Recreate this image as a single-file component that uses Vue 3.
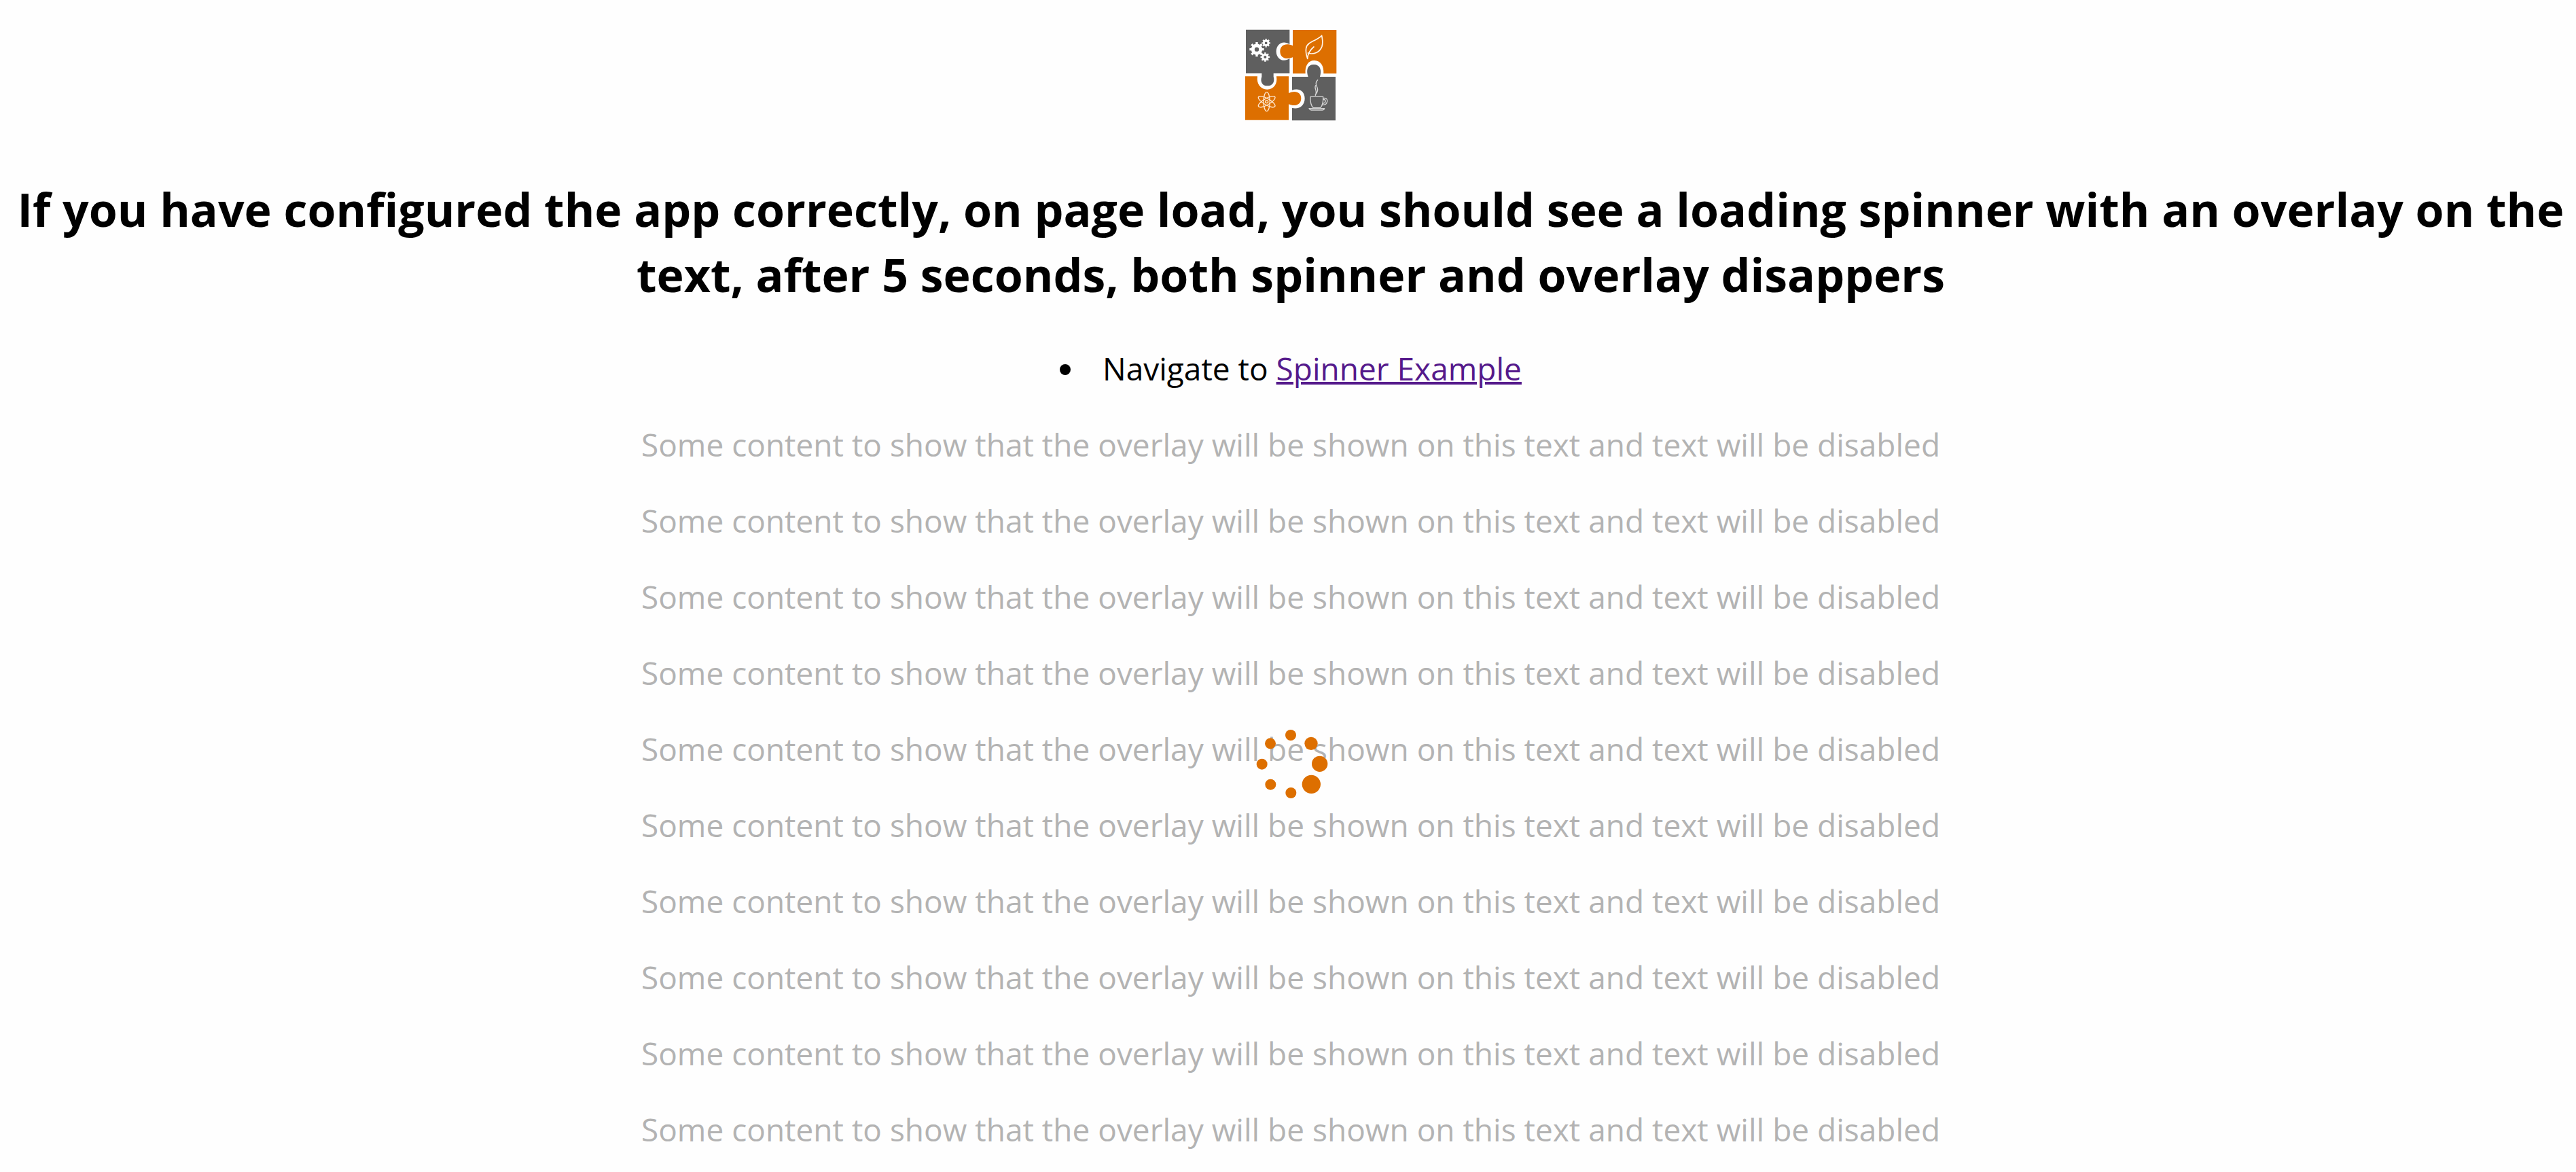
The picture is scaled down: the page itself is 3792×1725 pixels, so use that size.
<script setup>
const paragraphs = Array.from({ length: 10 }, (_, i) => i)
const teeth = [0, 45, 90, 135, 180, 225, 270, 315]
const gears = [
  { x: 120, y: 158, s: 1 },
  { x: 161, y: 130, s: 0.6 },
  { x: 157, y: 192, s: 0.64 },
]
const dots = [
  { x: 150, y: 24, r: 24 },
  { x: 240, y: 61, r: 29 },
  { x: 278, y: 151, r: 35 },
  { x: 241, y: 241, r: 41 },
  { x: 151, y: 279, r: 24 },
  { x: 61, y: 242, r: 24 },
  { x: 23, y: 152, r: 24 },
  { x: 60, y: 61, r: 24 },
]
</script>

<template>
  <main class="app">
    <svg class="logo" viewBox="0 0 540 540" role="img" aria-label="Logo">
      <path fill="#5f5f5f" d="M72 71H265V136C235 115 206 136 206 167S235 218 265 199V264H72Z" />
      <path fill="#dd6f00" d="M279 72H472V265H415C417 230 402 208 375 207S332 230 335 265H279V193C249 206 223 194 223 167S249 128 279 142Z" />
      <path fill="#dd6f00" d="M69 277H123C118 312 138 335 166 335S213 312 207 277H261V351C290 337 316 347 316 374S290 413 261 400V470H69Z" />
      <path fill="#5f5f5f" d="M276 279H347C337 249 344 225 372 225S408 249 399 279H468V472H276V417C309 424 332 405 332 374S307 327 276 338Z" />
      <path fill="#5f5f5f" d="M142 262H194V278C201 303 189 319 167 319S134 302 142 278Z" />

      <g v-for="gear in gears" :key="gear.x" :transform="`translate(${gear.x} ${gear.y}) scale(${gear.s})`">
        <circle r="17" fill="none" stroke="#fff" stroke-width="15" />
        <rect v-for="a in teeth" :key="a" x="-5" y="-32" width="10" height="12" fill="#fff" :transform="`rotate(${a})`" />
      </g>

      <g fill="none" stroke="#fff4e8" stroke-width="5" stroke-linecap="round" stroke-linejoin="round">
        <path d="M407 97C391 119 343 121 338 153C335 169 338 180 344 199C345 183 351 164 372 147M346 174C372 183 398 171 408 145C414 126 409 110 407 97" />
      </g>

      <g transform="translate(164 389)" fill="none" stroke="#ffe8d0" stroke-width="4">
        <ellipse rx="14" ry="42" />
        <ellipse rx="14" ry="42" transform="rotate(60)" />
        <ellipse rx="14" ry="42" transform="rotate(120)" />
        <circle r="6" />
      </g>

      <g fill="none" stroke="#d6d6d6" stroke-width="4" stroke-linecap="round" stroke-linejoin="round">
        <path d="M357 367H413C414 389 410 408 401 416H370C360 408 356 389 357 367ZM351 419H419C417 425 413 426 409 426H360C355 425 352 423 351 419Z" />
        <path d="M413 374C426 370 433 378 431 389C429 400 419 404 408 403M413 380C421 378 425 383 423 389C421 395 416 397 411 396" />
        <path d="M389 293C369 311 397 328 387 345C385 352 380 356 379 361M381 316C370 329 390 340 379 359" />
      </g>
    </svg>

    <h1>If you have configured the app correctly, on page load, you should see a loading spinner with an overlay on the text, after 5 seconds, both spinner and overlay disappers</h1>

    <ul>
      <li>Navigate to <a href="#spinner">Spinner Example</a></li>
    </ul>

    <p v-for="n in paragraphs" :key="n">Some content to show that the overlay will be shown on this text and text will be disabled</p>

    <div class="overlay" role="status" aria-label="Loading">
      <svg class="spinner" viewBox="0 0 300 300">
        <circle v-for="(dot, i) in dots" :key="i" :cx="dot.x" :cy="dot.y" :r="dot.r" fill="#dd6f00" />
      </svg>
    </div>
  </main>
</template>

<style>
body {
  margin: 0;
  background: #fefefe;
}
</style>

<style scoped>
.app {
  position: relative;
  padding: 20px 0 0 8px;
  font-family: "Open Sans", "Noto Sans", sans-serif;
  font-size: 46px;
  line-height: 64px;
  color: #000;
  text-align: center;
}

.logo {
  display: block;
  width: 180px;
  height: 180px;
  margin: 0 auto;
}

h1 {
  margin: 60px 0 58px;
  font-size: 68px;
  font-weight: 700;
  line-height: 96px;
}

ul {
  margin: 0;
  padding: 0;
  list-style-position: inside;
}

a {
  color: #551a8b;
  text-decoration-thickness: 4px;
}

p {
  margin: 48px 0 0;
  color: #b3b3b3;
}

.overlay {
  position: fixed;
  inset: 0 0 0 8px;
  display: flex;
  align-items: center;
  justify-content: center;
  padding-top: 522px;
  box-sizing: border-box;
}

.spinner {
  width: 100px;
  height: 100px;
  overflow: visible;
}
</style>
